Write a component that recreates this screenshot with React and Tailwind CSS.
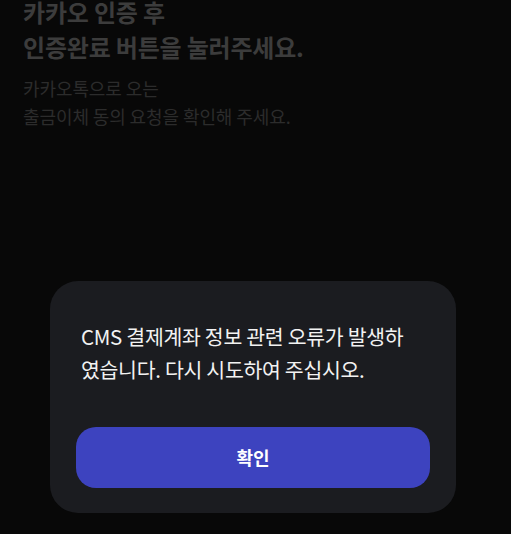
const FONT = { fontFamily: '"Noto Sans CJK KR", "Noto Sans", sans-serif' };

export default function App() {
  return (
    <div
      className="relative h-[534px] w-[511px] overflow-hidden bg-[#080808]"
      style={FONT}
    >
      {/* dimmed page behind the dialog */}
      <div className="px-[23px]">
        <h1 className="-mt-[6px] text-[24px] font-bold leading-[35px] tracking-[-0.2px] text-[#3c3c3c]">
          카카오 인증 후
          <br />
          인증완료 버튼을 눌러주세요.
        </h1>
        <p className="mt-[10px] text-[18px] leading-[28px] tracking-[-0.1px] text-[#2c2c2c]">
          카카오톡으로 오는
          <br />
          출금이체 동의 요청을 확인해 주세요.
        </p>
      </div>

      {/* dialog */}
      <div className="absolute left-[50px] top-[281px] w-[406px] rounded-[28px] bg-[#1b1c20] px-[26px] pb-[25px] pt-[39px]">
        <p className="px-[5px] text-[20.5px] leading-[33px] tracking-[-0.3px] text-[#f2f2f2]">
          CMS 결제계좌 정보 관련 오류가 발생하
          <br />
          였습니다. 다시 시도하여 주십시오.
        </p>
        <button
          type="button"
          className="mt-[41px] flex h-[61px] w-full items-center justify-center rounded-[20px] bg-[#3d43bf] text-[18px] font-bold text-white"
        >
          확인
        </button>
      </div>
    </div>
  );
}
